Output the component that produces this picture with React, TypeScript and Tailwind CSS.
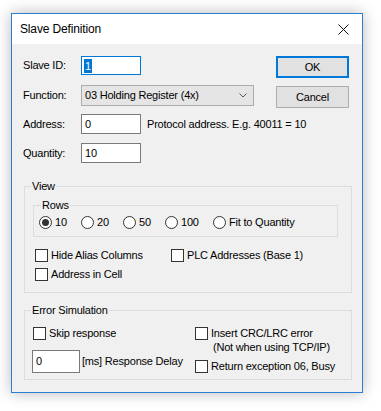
import React from "react";

const FONT = { fontFamily: '"Liberation Sans", Arial, sans-serif' };

function Check({ label, className = "" }: { label: React.ReactNode; className?: string }) {
  return (
    <div className={`flex items-start gap-[3px] ${className}`}>
      <span className="mt-[0.5px] h-[13px] w-[13px] shrink-0 border border-[#333] bg-white" />
      <span className="leading-[14px]">{label}</span>
    </div>
  );
}

function Radio({ label, checked = false, className = "" }: { label: string; checked?: boolean; className?: string }) {
  return (
    <div className={`flex items-center gap-[3px] ${className}`}>
      <span className="flex h-[13px] w-[13px] shrink-0 items-center justify-center rounded-full border border-[#333] bg-white">
        {checked && <span className="h-[7px] w-[7px] rounded-full bg-[#333]" />}
      </span>
      <span className="leading-[14px]">{label}</span>
    </div>
  );
}

export default function App() {
  return (
    <div className="h-[411px] w-[381px] bg-white pl-[11px] pt-[13px]" style={FONT}>
      {/* ── Window ── */}
      <div className="flex h-[380px] w-[352px] flex-col border border-[#2b7fd3] bg-[#f0f0f0] text-[11px] tracking-[-0.2px] text-black shadow-[0_0_14px_rgba(0,0,0,0.28)]">
        {/* Title bar */}
        <div className="flex h-[30px] items-center justify-between bg-white pl-[8px] pr-[13px]">
          <span className="text-[12px] tracking-[-0.15px]">Slave Definition</span>
          <svg width="11" height="11" viewBox="0 0 11 11" className="mt-[1px]">
            <path d="M0.5 0.5 L10.5 10.5 M10.5 0.5 L0.5 10.5" stroke="#111" strokeWidth="1" />
          </svg>
        </div>

        {/* Body */}
        <div className="flex flex-1 flex-col pl-[11px] pr-[13px] pt-[12px]">
          {/* Slave ID */}
          <div className="flex h-[22px] items-start">
            <span className="flex h-[19px] w-[58px] items-center">Slave ID:</span>
            <div className="flex h-[19px] w-[60px] items-center border border-[#0078d7] bg-white pl-[2px]">
              <span className="bg-[#0078d7] px-[1px] leading-[14px] text-white">1</span>
            </div>
            <button className="ml-auto flex h-[22px] w-[73px] items-center justify-center border-2 border-[#0078d7] bg-[#e1e1e1]">
              OK
            </button>
          </div>

          {/* Function */}
          <div className="mt-[7px] flex h-[23px] items-start">
            <span className="flex h-[21px] w-[58px] items-center">Function:</span>
            <div className="flex h-[21px] w-[173px] items-center justify-between border border-[#acacac] bg-[#e5e5e5] pl-[3px] pr-[6px]">
              <span>03 Holding Register (4x)</span>
              <svg width="8" height="5" viewBox="0 0 8 5">
                <path d="M0.5 0.5 L4 4 L7.5 0.5" fill="none" stroke="#555" strokeWidth="1" />
              </svg>
            </div>
            <button className="ml-auto mt-[1px] flex h-[22px] w-[73px] items-center justify-center border border-[#adadad] bg-[#e1e1e1]">
              Cancel
            </button>
          </div>

          {/* Address */}
          <div className="mt-[6px] flex h-[20px] items-center">
            <span className="w-[58px]">Address:</span>
            <div className="flex h-[20px] w-[60px] items-center border border-[#7a7a7a] bg-white pl-[3px]">0</div>
            <span className="ml-[6px] whitespace-nowrap">Protocol address. E.g. 40011 = 10</span>
          </div>

          {/* Quantity */}
          <div className="mt-[9px] flex h-[20px] items-center">
            <span className="w-[58px]">Quantity:</span>
            <div className="flex h-[20px] w-[60px] items-center border border-[#7a7a7a] bg-white pl-[3px]">10</div>
          </div>

          {/* View */}
          <fieldset className="ml-[1px] mr-[-3px] mt-[16px] border border-[#dcdcdc] pb-[11px]">
            <legend className="ml-[6px] px-[1px] leading-[14px]">View</legend>
            <fieldset className="ml-[8px] mr-[13px] mt-[5px] border border-[#dcdcdc] pb-[7px]">
              <legend className="ml-[7px] px-[1px] leading-[14px]">Rows</legend>
              <div className="mt-[3px] flex pl-[5px]">
                <Radio label="10" checked className="w-[42px]" />
                <Radio label="20" className="w-[42px]" />
                <Radio label="50" className="w-[42px]" />
                <Radio label="100" className="w-[48px]" />
                <Radio label="Fit to Quantity" />
              </div>
            </fieldset>
            <div className="mt-[11px] flex pl-[10px]">
              <Check label="Hide Alias Columns" className="w-[136px]" />
              <Check label="PLC Addresses (Base 1)" />
            </div>
            <div className="mt-[5px] flex pl-[10px]">
              <Check label="Address in Cell" />
            </div>
          </fieldset>

          {/* Error Simulation */}
          <fieldset className="ml-[1px] mr-[-3px] mt-[10px] border border-[#dcdcdc] pb-[6px]">
            <legend className="ml-[6px] px-[1px] leading-[14px]">Error Simulation</legend>
            <div className="mt-[9px] flex">
              <div className="flex w-[170px] flex-col pl-[7px]">
                <Check label="Skip response" className="ml-[1px]" />
                <div className="mt-[10px] flex items-center gap-[2px]">
                  <div className="flex h-[23px] w-[48px] items-center border border-[#7a7a7a] bg-white pl-[3px]">0</div>
                  <span>[ms] Response Delay</span>
                </div>
              </div>
              <div className="flex flex-col">
                <Check
                  label={
                    <>
                      Insert CRC/LRC error
                      <br />
                      <span className="ml-[2px]">(Not when using TCP/IP)</span>
                    </>
                  }
                />
                <Check label="Return exception 06, Busy" className="mt-[5px]" />
              </div>
            </div>
          </fieldset>
        </div>
      </div>
    </div>
  );
}
